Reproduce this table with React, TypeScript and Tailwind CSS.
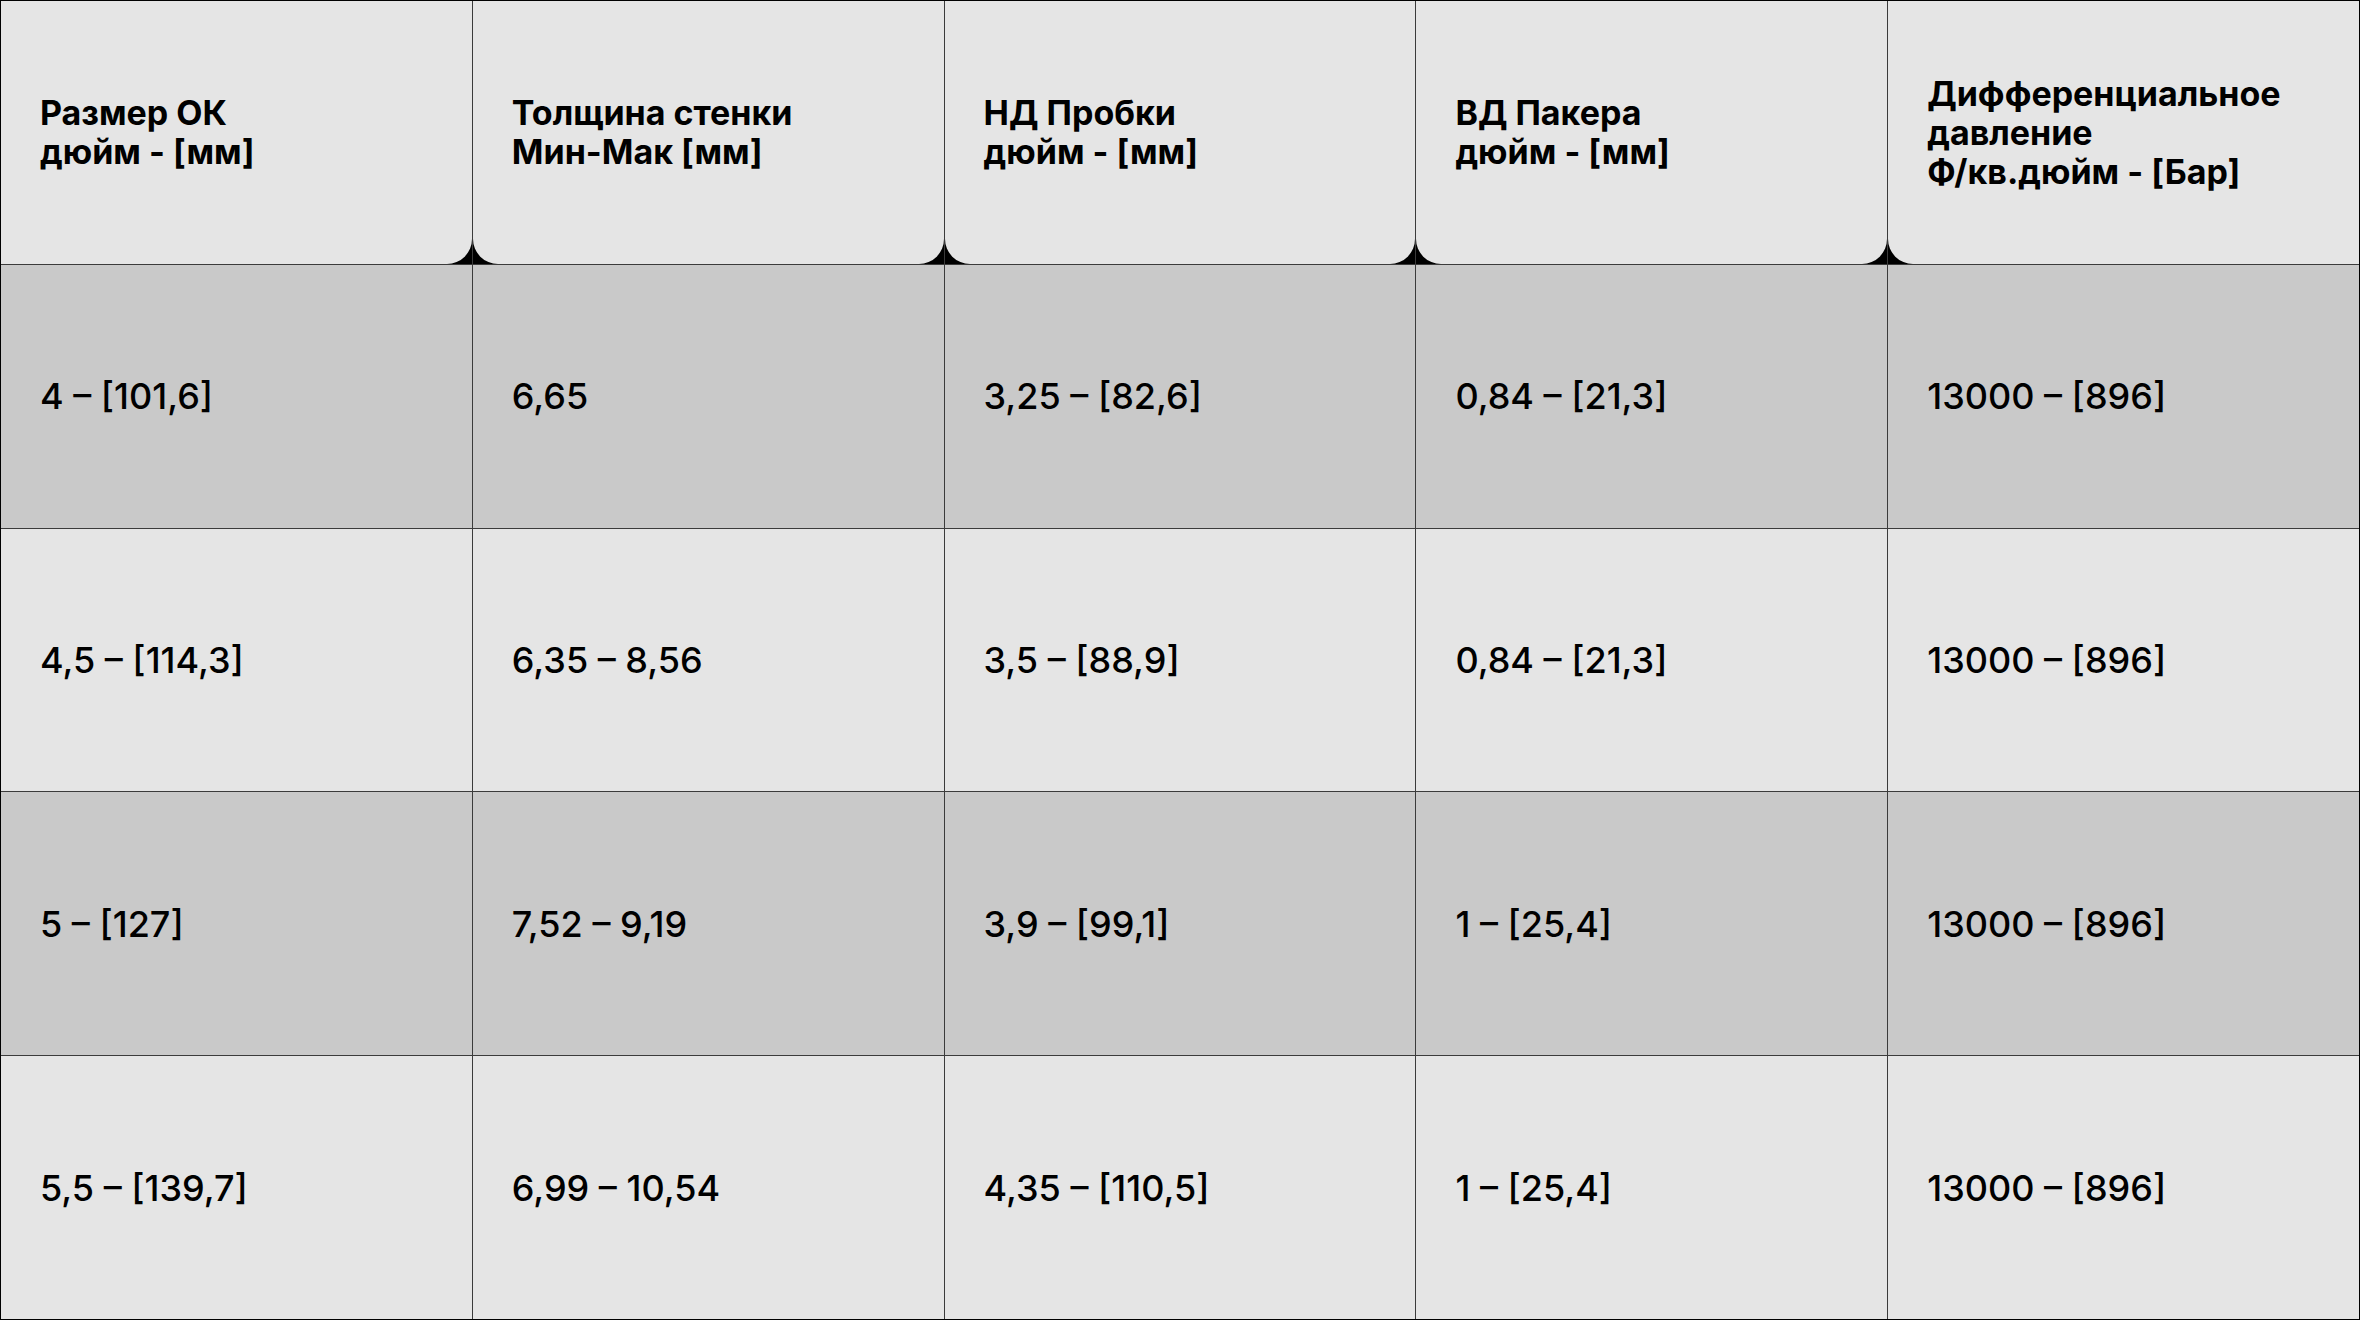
import React from 'react';

const headers: string[][] = [
  ['Размер ОК', 'дюйм - [мм]'],
  ['Толщина стенки', 'Мин-Мак [мм]'],
  ['НД Пробки', 'дюйм - [мм]'],
  ['ВД Пакера', 'дюйм - [мм]'],
  ['Дифференциальное', 'давление', 'Ф/кв.дюйм - [Бар]'],
];

const rows: string[][] = [
  ['4 – [101,6]', '6,65', '3,25 – [82,6]', '0,84 – [21,3]', '13000 – [896]'],
  ['4,5 – [114,3]', '6,35 – 8,56', '3,5 – [88,9]', '0,84 – [21,3]', '13000 – [896]'],
  ['5 – [127]', '7,52 – 9,19', '3,9 – [99,1]', '1 – [25,4]', '13000 – [896]'],
  ['5,5 – [139,7]', '6,99 – 10,54', '4,35 – [110,5]', '1 – [25,4]', '13000 – [896]'],
];

// header cells get a rounded bottom corner next to each inner divider
const cornerClass = (i: number) => {
  if (i === 0) return 'rounded-br-[25px]';
  if (i === headers.length - 1) return 'rounded-bl-[25px]';
  return 'rounded-bl-[25px] rounded-br-[25px]';
};

const App: React.FC = () => {
  return (
    <div
      className="w-[2360px] h-[1320px] border border-black bg-[#3b3b3b] grid grid-rows-5 gap-px overflow-hidden"
      style={{ fontFamily: 'Inter, "Noto Sans", sans-serif' }}
    >
      {/* Header */}
      <div className="grid grid-cols-5 gap-px">
        {headers.map((lines, i) => (
          <div key={i} className="bg-black">
            <div className={`h-full bg-[#e5e5e5] flex items-center pl-[39px] ${cornerClass(i)}`}>
              <div className="text-[34px] leading-[39px] font-bold text-black">
                {lines.map((l, j) => (
                  <div key={j}>{l}</div>
                ))}
              </div>
            </div>
          </div>
        ))}
      </div>

      {/* Body rows */}
      {rows.map((row, r) => (
        <div key={r} className="grid grid-cols-5 gap-px">
          {row.map((cell, c) => (
            <div
              key={c}
              className={`flex items-center pl-[39px] text-[36px] font-medium text-black ${
                r % 2 === 0 ? 'bg-[#c9c9c9]' : 'bg-[#e5e5e5]'
              }`}
            >
              {cell}
            </div>
          ))}
        </div>
      ))}
    </div>
  );
};

export default App;
